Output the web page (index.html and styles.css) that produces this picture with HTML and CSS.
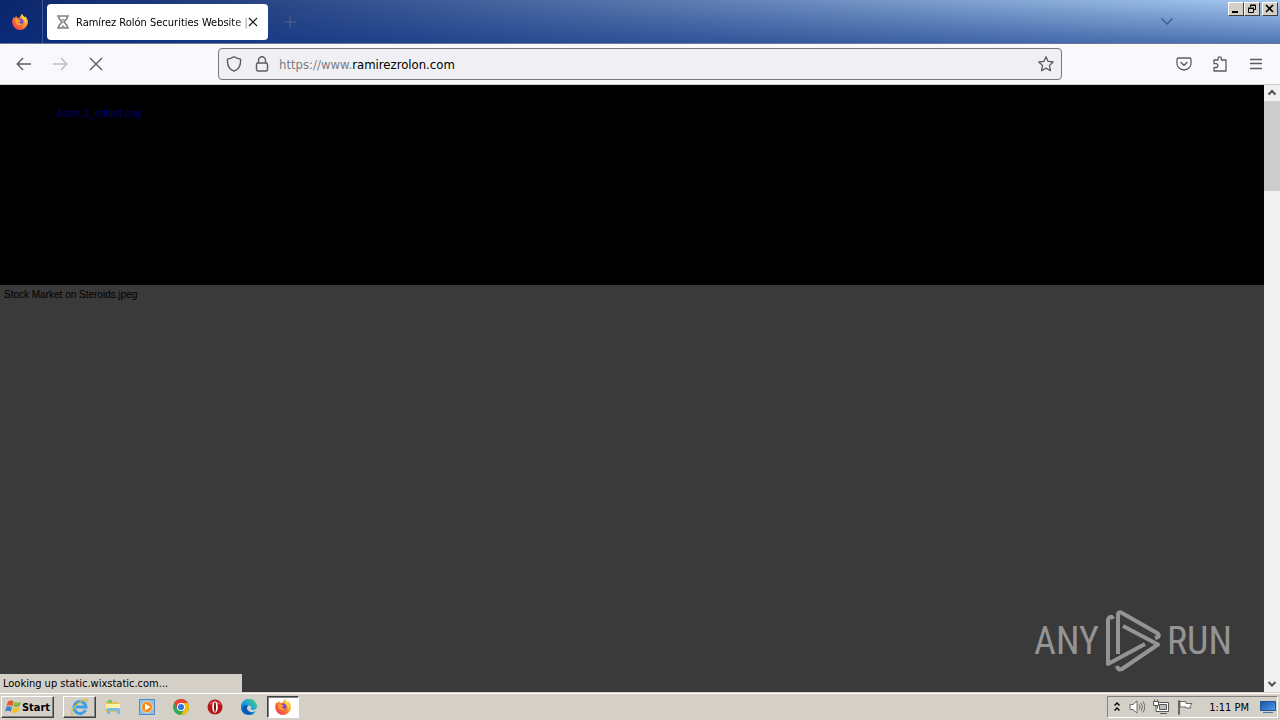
FILE: index.html
```html
<!DOCTYPE html>
<html lang="en">
<head>
	<meta charset="UTF-8">
	<meta name="viewport" content="width=device-width, initial-scale=1.0">
	<title>Ramírez Rolón Securities Website</title>
	<link rel="stylesheet" href="styles.css">
</head>
<body>
	<svg class="defs" aria-hidden="true">
		<defs>
			<linearGradient id="fire" x1="1" y1="0" x2="0" y2="1">
				<stop offset="0" stop-color="#ffe04a"/>
				<stop offset=".45" stop-color="#ff8a2a"/>
				<stop offset="1" stop-color="#f0265a"/>
			</linearGradient>
			<linearGradient id="screen" x1="0" y1="0" x2="1" y2="1">
				<stop offset="0" stop-color="#1650a8"/>
				<stop offset="1" stop-color="#4f9de8"/>
			</linearGradient>
			<linearGradient id="sea" x1="0" y1="1" x2="1" y2="0">
				<stop offset="0" stop-color="#0b5cc0"/>
				<stop offset=".55" stop-color="#19a5de"/>
				<stop offset="1" stop-color="#5bd65a"/>
			</linearGradient>
			<symbol id="firefox" viewBox="0 0 16 16">
				<path fill="url(#fire)" d="M8 16A8 8 0 0 1 .2 7.6C.3 5.600 1 4 1.800 3L2.600 4.300 4.200 2 5.300 4 8 3.400C8.300 1.900 9 .7 10.200 0c.3 1.600 1.300 2.400 2.500 3.300l.2-1.200C15 4 16 6 15.900 8.500A8 8 0 0 1 8 16z"/>
				<circle cx="8" cy="8" r="3.400" fill="#7542e5"/>
				<path fill="#ff9b2b" d="M3 5.200c1.600-.7 3-.4 4 .6l2 .5c-.2 1-1.500 1.200-1.800 2 .5 1.500 2.300 1.700 3.900.8C10.300 12 5 12.500 3.700 9z"/>
				<path fill="#ffd83d" d="M10.200 0c.3 2 2 2.800 3.200 4.400 1.600 2.200 1.200 5.200-.2 6.800.5-3-.2-4.900-2-6C9.700 4.200 9 2 10.200 0z"/>
			</symbol>
		</defs>
	</svg>

	<header class="tab-bar">
		<div class="brand"><svg width="16" height="16"><use href="#firefox"/></svg></div>
		<div class="tab">
			<svg width="14" height="14" viewBox="0 0 14 14" fill="none" stroke="#858585" stroke-width="1.700">
				<path d="M1 1h12M1 13h12M3 1v2.500L6 7l-3 3.500V13M11 1v2.500L8 7l3 3.500V13"/>
				<path d="M5 4h4L7 6zM4 13l3-3 3 3z" fill="#999" stroke="none"/>
			</svg>
			<span class="tab-title">Ramírez Rolón Securities Website |</span>
			<button class="icon-btn tab-close" aria-label="Close tab">
				<svg width="10" height="10" viewBox="0 0 10 10" stroke="#15141a" stroke-width="1.200"><path d="M1 1l8 8M9 1L1 9"/></svg>
			</button>
		</div>
		<button class="icon-btn new-tab" aria-label="New tab">
			<svg width="12" height="12" viewBox="0 0 12 12" stroke="#52657e"><path d="M6 0v12M0 6h12" stroke-width="1"/></svg>
		</button>
		<button class="icon-btn all-tabs" aria-label="List all tabs">
			<svg width="14" height="9" viewBox="0 0 14 9" fill="none" stroke="#3f5e91" stroke-width="1.500"><path d="M1.500 1.500L7 7l5.500-5.500"/></svg>
		</button>
		<div class="window-buttons">
			<button aria-label="Minimize"><svg width="10" height="10" viewBox="0 0 10 10"><path d="M1 7h6v2H1z"/></svg></button>
			<button aria-label="Restore"><svg width="10" height="10" viewBox="0 0 10 10" fill="none" stroke="#000"><path d="M3.500 3V1.500h5v4H7M3 1h6M1.500 4.500h5v4h-5zM1 4h6"/></svg></button>
			<button class="win-close" aria-label="Close"><svg width="10" height="10" viewBox="0 0 10 10" stroke="#000" stroke-width="1.600"><path d="M1 1l7 7M8 1L1 8"/></svg></button>
		</div>
	</header>

	<nav class="toolbar">
		<div class="nav-buttons">
			<button class="icon-btn" aria-label="Back"><svg width="16" height="14" viewBox="0 0 16 14" fill="none" stroke="#5b5b66" stroke-width="1.400"><path d="M15 7H1.500M7 1L1.200 7 7 13"/></svg></button>
			<button class="icon-btn" aria-label="Forward" disabled><svg width="16" height="14" viewBox="0 0 16 14" fill="none" stroke="#bcbcc2" stroke-width="1.400"><path d="M1 7h13.500M9 1l5.800 6L9 13"/></svg></button>
			<button class="icon-btn" aria-label="Stop"><svg width="14" height="14" viewBox="0 0 14 14" stroke="#5b5b66" stroke-width="1.400"><path d="M1 1l12 12M13 1L1 13"/></svg></button>
		</div>
		<div class="url-bar">
			<svg width="16" height="16" viewBox="0 0 16 16" fill="none" stroke="#5b5b66" stroke-width="1.400"><path d="M8 .8c2 1.500 4.200 2 6.500 2.300.5 5.500-1.200 10-6.500 12.100C2.700 13.100 1 8.600 1.500 3.100 3.800 2.800 6 2.300 8 .8z"/></svg>
			<svg width="14" height="16" viewBox="0 0 14 16" fill="none" stroke="#5b5b66" stroke-width="1.400"><rect x="1.500" y="7" width="11" height="8" rx="1.500"/><path d="M3.500 7V4.300a3.500 3.500 0 0 1 7 0V7"/></svg>
			<div class="url" role="textbox" aria-label="Address" contenteditable="true" spellcheck="false"><span>https://www.</span>ramirezrolon.com</div>
			<button class="icon-btn" aria-label="Bookmark this page"><svg width="16" height="16" viewBox="0 0 16 16" fill="none" stroke="#5b5b66" stroke-width="1.300" stroke-linejoin="round"><path d="M8 .8l2.100 4.600 5.100.6-3.800 3.400 1.100 5.300L8 12.100l-4.500 2.600 1.100-5.300L.8 6l5.100-.6z"/></svg></button>
		</div>
		<div class="tools">
			<button class="icon-btn" aria-label="Save to Pocket"><svg width="16" height="16" viewBox="0 0 16 16" fill="none" stroke="#5b5b66" stroke-width="1.300"><path d="M2.500 2h11q1.500 0 1.500 1.500v4a7 6.500 0 0 1-14 0v-4Q1 2 2.500 2zM4.500 6L8 9.300 11.500 6"/></svg></button>
			<button class="icon-btn" aria-label="Extensions"><svg width="16" height="16" viewBox="0 0 16 16" fill="none" stroke="#5b5b66" stroke-width="1.300" stroke-linejoin="round"><path d="M2 7V4h4V2.500a1.700 1.700 0 0 1 3.400 0V4H14v11H2v-3.500h2a1.900 1.900 0 0 0 0-3.800H2z"/></svg></button>
			<button class="icon-btn" aria-label="Menu"><svg width="14" height="12" viewBox="0 0 14 12" stroke="#5b5b66" stroke-width="1.400"><path d="M1 1.500h12M1 5.500h12M1 10.500h12"/></svg></button>
		</div>
	</nav>

	<main class="viewport">
		<div class="page">
			<div class="site-header"><a href="#">Asset 2_edited.png</a></div>
			<div class="hero">Stock Market on Steroids.jpeg</div>
		</div>
		<div class="scrollbar">
			<svg width="16" height="16" viewBox="0 0 16 16" fill="none" stroke="#505050" stroke-width="2"><path d="M4.500 9.500L8 6l3.500 3.500"/></svg>
			<div class="thumb"></div>
			<svg width="16" height="16" viewBox="0 0 16 16" fill="none" stroke="#505050" stroke-width="2"><path d="M4.500 6L8 9.500 11.500 6"/></svg>
		</div>
		<div class="status">Looking up static.wixstatic.com...</div>
		<div class="watermark">
			<span>ANY</span>
			<svg width="56" height="62" viewBox="0 0 56 62" fill="none" stroke="#949494" stroke-width="4" stroke-linejoin="round">
				<path d="M8 9Q7 6 5 7 3 8 3 11v43l37-20"/>
				<path d="M13 44V5q0-4 4-2l35 20q3 2 1 4l-3 1"/>
				<path d="M18 16l35 18.500L17 59q-4 2-5-3"/>
			</svg>
			<span>RUN</span>
		</div>
	</main>

	<footer class="taskbar">
		<button class="start">
			<svg width="17" height="16" viewBox="0 0 17 16">
				<path fill="#e65328" d="M3 2.500Q6 .5 8.500 2.500L7.300 7.200Q4.500 5.500 1.500 7z"/>
				<path fill="#82b93c" d="M9.300 3q3 1.500 6.700-.3L14.500 7.300q-3 1.500-6.300.2z"/>
				<path fill="#3c85c8" d="M1.300 8Q4 6.500 7 8.200L5.800 12.700Q3 11 0 12.500z"/>
				<path fill="#f9bd28" d="M8 8.500q3 1.500 6.300-.2L13 13q-3 1.500-6.300.2z"/>
			</svg>
			Start
		</button>
		<button class="task raised" aria-label="Internet Explorer">
			<svg width="20" height="18" viewBox="0 0 20 18" fill="none">
				<path d="M15.500 12a6 6 0 1 1 .5-3H6" stroke="#3ba1e3" stroke-width="3"/>
				<path d="M3 16C-1 16 4 8 10 4s9-3 7 0" stroke="#e7b83b" stroke-width="1.400"/>
			</svg>
		</button>
		<button class="task" aria-label="Explorer">
			<svg width="16" height="16" viewBox="0 0 16 16">
				<path fill="#e5be58" d="M1 2h5l1 1h7v10H1z"/>
				<path fill="#7cc46a" d="M3 1h4v3H3z"/>
				<path fill="#fff0a8" d="M1 5h14v5H1z"/>
				<path fill="#76bde5" d="M2 9h12q1 0 1 2v4h-3v-3H5v3H2z"/>
			</svg>
		</button>
		<button class="task" aria-label="Media Player">
			<svg width="16" height="16" viewBox="0 0 16 16">
				<path fill="#8fc0e8" stroke="#4b8ccb" d="M.5.5h15v15H.5z"/>
				<circle cx="8" cy="8" r="5.500" fill="#f28a1c" stroke="#fbd29a"/>
				<path fill="#fff" d="M6 4.500L11.500 8 6 11.500z"/>
			</svg>
		</button>
		<button class="task" aria-label="Chrome">
			<svg width="16" height="16" viewBox="0 0 16 16">
				<circle cx="8" cy="8" r="8" fill="#34a853"/>
				<path fill="#ea4335" d="M1.100 4A8 8 0 0 1 14.900 4H8L4.500 10z"/>
				<path fill="#fbbc05" d="M8 4h6.900A8 8 0 0 1 8 16l3.500-6z"/>
				<circle cx="8" cy="8" r="4" fill="#fff"/>
				<circle cx="8" cy="8" r="3.100" fill="#3478e5"/>
			</svg>
		</button>
		<button class="task" aria-label="Opera">
			<svg width="16" height="16" viewBox="0 0 16 16">
				<circle cx="8" cy="8" r="7.500" fill="#b81418"/>
				<path fill="#e25252" d="M2 6a6.200 5 0 0 1 12 0q-6-3-12 0z"/>
				<ellipse cx="8" cy="8" rx="2.800" ry="5.800" fill="#fff"/>
				<ellipse cx="8" cy="8" rx="1" ry="5" fill="#82100f"/>
			</svg>
		</button>
		<button class="task" aria-label="Edge">
			<svg width="16" height="16" viewBox="0 0 16 16">
				<path fill="url(#sea)" d="M0 8a8 8 0 0 1 16-.5C16 10 14 11 12 11q-2.500 0-2-1.500Q11 7 8 6.500C5 7 5 12 10 13q3 .4 5-1A8 8 0 0 1 0 8z"/>
				<path fill="#0d58b2" d="M1 10c1-4 4-5 6-3.300C4.500 9 6.500 14 12 13.600 8 17 2 15.500 1 10z"/>
			</svg>
		</button>
		<button class="task active" aria-label="Firefox"><svg width="16" height="16"><use href="#firefox"/></svg></button>
		<div class="tray">
			<svg width="8" height="12" viewBox="0 0 8 12" fill="none" stroke="#000" stroke-width="1.400"><path d="M1.500 4.500L4 2l2.500 2.500M1.500 9.500L4 7l2.500 2.500"/></svg>
			<svg width="16" height="16" viewBox="0 0 16 16" fill="#fff" stroke="#6c6c6c"><path d="M1 5.500h3L8 2v12l-4-3.500H1z"/><path fill="none" d="M10 5.500q2 2.500 0 5M12 4q3 4 0 8M14 2.500q3.500 5.500 0 11"/></svg>
			<svg width="16" height="16" viewBox="0 0 16 16" fill="#bbb" stroke="#585858"><path fill="#fff" d="M4.500 3.500h11v9h-11z"/><path d="M6.500 5.500h7v5h-7zM7 14.500h7"/><path fill="#fff" d="M.5 2.500h5v4h-5zM1.500.5v2M4.500.5v2M3 6.500v6h3"/></svg>
			<svg width="16" height="16" viewBox="0 0 16 16" fill="#fff" stroke="#686868"><path d="M1.500 1.500v14h1v-14zM3 2.500h6v2h6l-2 3 1 1.500H9V8H3z"/></svg>
			<time>1:11 PM</time>
			<svg width="16" height="14" viewBox="0 0 16 14"><path fill="url(#screen)" stroke="#21569b" d="M.5 1.500h15v9H.5z"/><path fill="#e4edf7" stroke="#52769e" d="M3 12.500h10"/></svg>
		</div>
	</footer>
</body>
</html>
```
FILE: styles.css
```css
* {
	box-sizing: border-box;
}

body {
	display: flex;
	flex-direction: column;
	min-height: 100vh;
	margin: 0;
	font-family: "DejaVu Sans Condensed", "DejaVu Sans", sans-serif;
	font-size: 11px;
	color: #000;
}

svg {
	display: block;
	flex: none;
}

button {
	display: flex;
	align-items: center;
	justify-content: center;
	padding: 0;
	font-family: inherit;
	color: inherit;
}

.defs {
	position: absolute;
	width: 0;
	height: 0;
}

.icon-btn {
	border: none;
	background: none;
}

/* Tabs */
.tab-bar {
	display: flex;
	height: 44px;
	border-bottom: 1px solid #6d7894;
	background: linear-gradient(to bottom, rgba(10, 48, 132, 0), rgba(10, 48, 132, .55)), linear-gradient(to right, #0a246a, #a6caf0);
}

.brand {
	display: flex;
	align-items: center;
	justify-content: center;
	width: 43px;
	padding-right: 2px;
	border-right: 1px solid #3f5690;
}

.tab {
	display: flex;
	align-items: center;
	width: 221px;
	height: 36px;
	margin: 4px 0 0 4px;
	padding: 0 10px 0 9px;
	border-radius: 4px;
	background: #fff;
}

.tab-title {
	flex: 1;
	margin-left: 6px;
	padding-top: 1px;
	white-space: nowrap;
	-webkit-mask-image: linear-gradient(to left, rgba(0, 0, 0, .4), #000 16px);
	mask-image: linear-gradient(to left, rgba(0, 0, 0, .4), #000 16px);
}

.tab-close {
	width: 12px;
}

.new-tab {
	width: 44px;
}

.all-tabs {
	width: 30px;
	margin-left: auto;
}

.window-buttons {
	display: flex;
	margin: 2px 2px 0 46px;
}

.window-buttons button {
	width: 16px;
	height: 14px;
	border: 1px solid;
	border-color: #fff #404040 #404040 #fff;
	background: #d4d0c8;
}

.window-buttons .win-close {
	margin-left: 2px;
}

/* Navigation */
.toolbar {
	display: flex;
	align-items: center;
	height: 41px;
	border-bottom: 1px solid #ccccd0;
	background: #f9f9fb;
}

.nav-buttons {
	display: flex;
	gap: 4px;
	width: 218px;
	padding-left: 8px;
}

.nav-buttons .icon-btn,
.tools .icon-btn {
	width: 32px;
	height: 32px;
}

.url-bar {
	display: flex;
	flex: 1;
	align-items: center;
	height: 32px;
	padding: 0 7px;
	border: 1px solid #77777f;
	border-radius: 4px;
	background: #f0f0f4;
}

.url-bar svg + svg {
	margin-left: 13px;
}

.url {
	flex: 1;
	margin-left: 10px;
	font-size: 13px;
	outline: none;
}

.url span {
	color: #7c7c82;
}

.tools {
	display: flex;
	justify-content: flex-end;
	gap: 4px;
	width: 218px;
	padding-right: 8px;
}

/* Page */
.viewport {
	position: relative;
	display: flex;
	flex: 1;
}

.page {
	display: flex;
	flex: 1;
	flex-direction: column;
	font-family: "Liberation Sans", Arial, sans-serif;
	font-size: 10px;
	line-height: 12px;
}

.site-header {
	height: 200px;
	padding: 23px 56px;
	background: #000;
}

.site-header a {
	color: #00006c;
	text-decoration: none;
}

.hero {
	flex: 1;
	padding: 4px;
	background: #3a3a3a;
}

.scrollbar {
	display: flex;
	flex-direction: column;
	justify-content: space-between;
	width: 16px;
	background: #f0f0f0;
}

.thumb {
	height: 90px;
	margin-bottom: auto;
	background: #cdcdcd;
}

.status {
	position: absolute;
	bottom: 0;
	left: 0;
	width: 242px;
	padding: 2px 3px 0;
	line-height: 16px;
	background: #d4d0c8;
}

.watermark {
	position: absolute;
	right: 48px;
	bottom: 20px;
	display: flex;
	align-items: center;
	gap: 6px;
	font-family: "Roboto Condensed", "Liberation Sans Narrow", "Liberation Sans", sans-serif;
	font-size: 38px;
	color: #949494;
}

/* Taskbar */
.taskbar {
	display: flex;
	align-items: center;
	height: 28px;
	padding: 1px 2px 0 1px;
	border-top: 1px solid #d4d0c8;
	background: #d4d0c8;
	box-shadow: inset 0 1px #fff;
}

.start {
	gap: 0;
	width: 53px;
	height: 22px;
	margin-right: 9px;
	border: 1px solid;
	border-color: #fff #404040 #404040 #fff;
	background: #d4d0c8;
	box-shadow: inset -1px -1px #808080;
	font-size: 11px;
	font-weight: bold;
}

.task {
	width: 34px;
	height: 22px;
	border: none;
	background: none;
}

.task.raised {
	width: 33px;
	border: 1px solid;
	border-color: #fff #404040 #404040 #fff;
	box-shadow: inset -1px -1px #808080;
}

.task.active {
	width: 32px;
	margin-left: 1px;
	border: 1px solid;
	border-color: #404040 #fff #fff #404040;
	background: #fff;
	box-shadow: inset 1px 1px #808080;
}

.tray {
	display: flex;
	align-items: center;
	gap: 8px;
	height: 22px;
	margin-left: auto;
	padding: 0 1px 0 5px;
	border: 1px solid;
	border-color: #808080 #fff #fff #808080;
}

.tray time {
	margin: 0 3px 0 8px;
	white-space: nowrap;
}
```
